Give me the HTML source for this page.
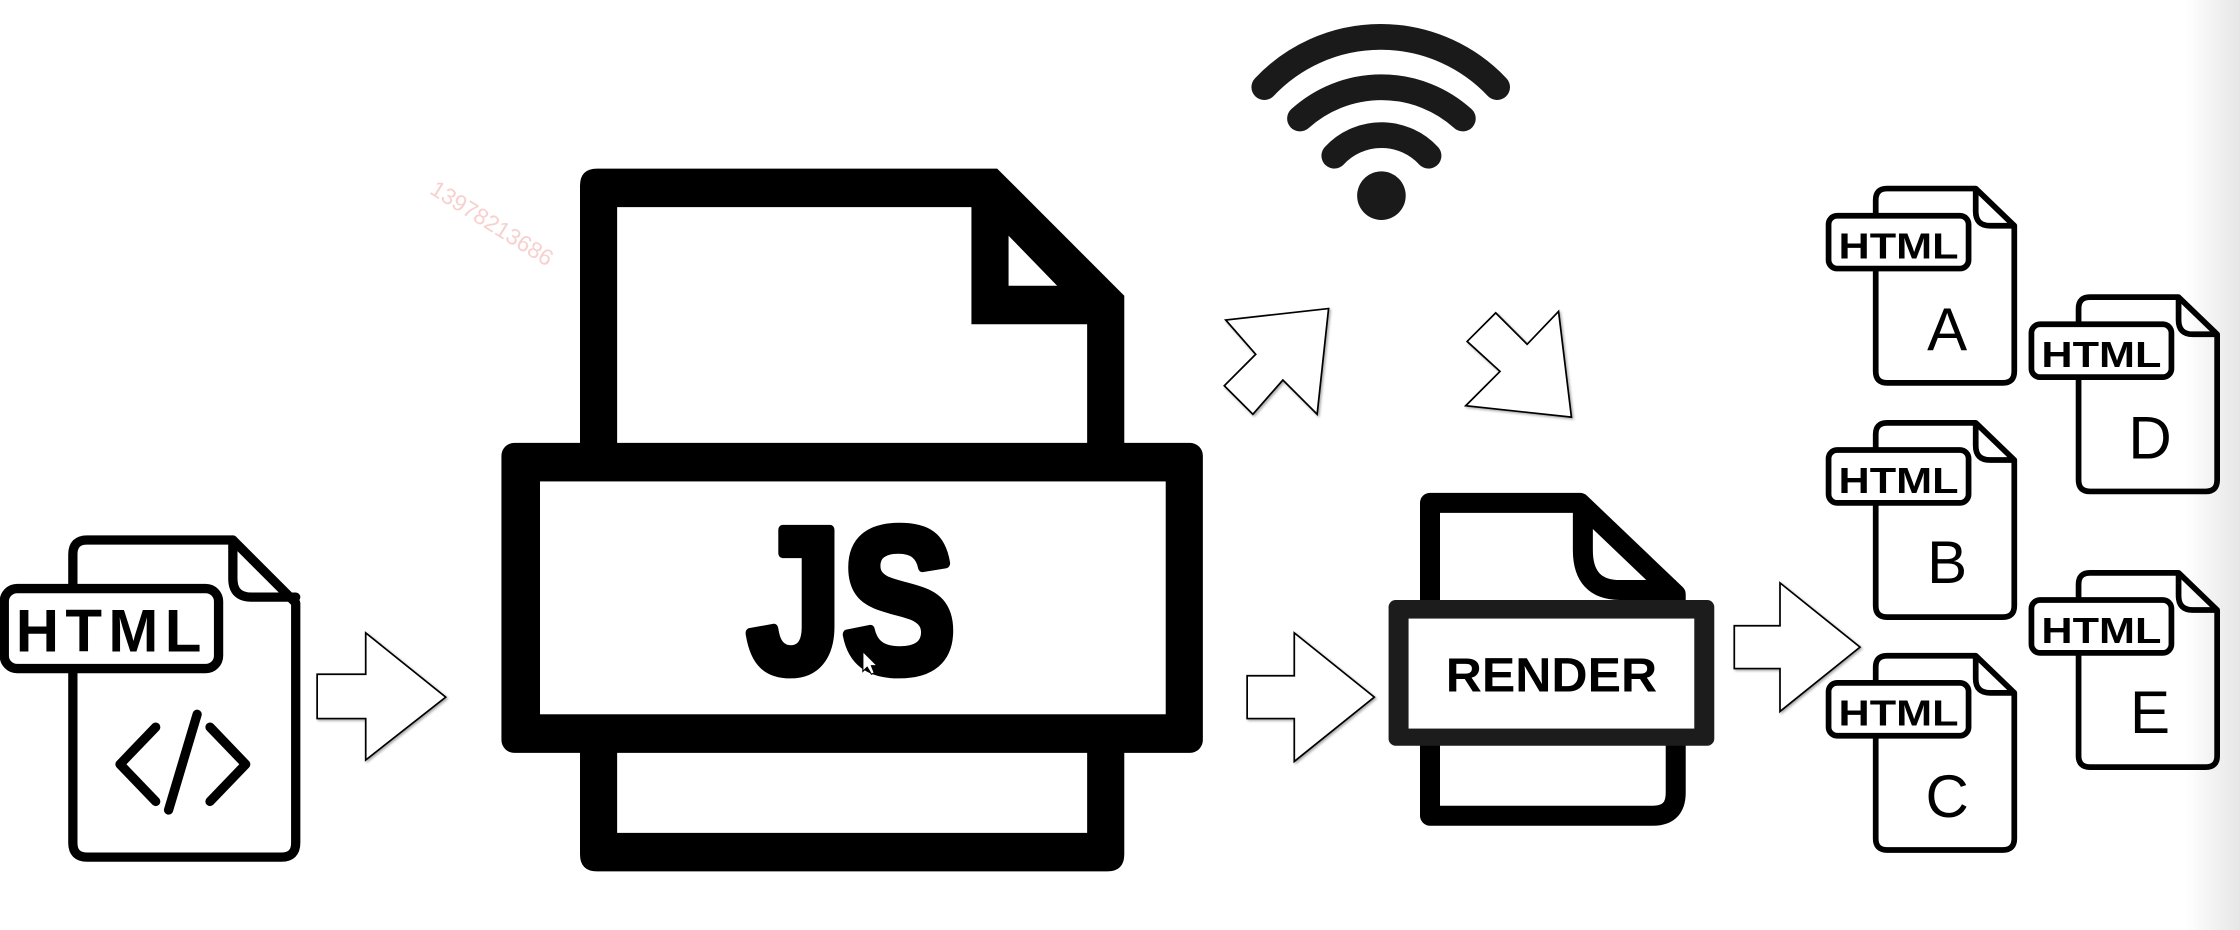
<!DOCTYPE html>
<html><head><meta charset="utf-8"><style>
html,body{margin:0;padding:0;background:#fff;}
svg{display:block;}
text{font-family:"Liberation Sans",sans-serif;}
</style></head><body>
<svg width="2240" height="930" viewBox="0 0 1568 651" xmlns="http://www.w3.org/2000/svg">
<defs>
<linearGradient id="g" x1="0" x2="1" y1="0" y2="0">
<stop offset="0" stop-color="#fff"/><stop offset="1" stop-color="#e6e6e6"/>
</linearGradient>
<filter id="sh" x="-20%" y="-20%" width="140%" height="140%"><feDropShadow dx="1" dy="1" stdDeviation="1" flood-color="#000" flood-opacity="0.35"/></filter>
</defs>
<rect width="1568" height="651" fill="#fff"/>
<rect x="1530" y="0" width="38" height="651" fill="url(#g)"/>

<!-- watermark -->
<text x="300" y="135" font-size="16" fill="#f7d0d0" transform="rotate(32 300 135)">13978213686</text>

<!-- left HTML file -->
<g fill="none" stroke="#000" stroke-width="6.5" stroke-linejoin="round" stroke-linecap="round">
<path d="M51 410 V388 Q51 378 61 378 H163 L207 422 V590 Q207 600 197 600 H61 Q51 600 51 590 V470"/>
<path d="M163 378 V405 Q163 418 176 418 H207"/>
<rect x="3" y="412" width="150" height="56" rx="9"/>
<path d="M109 509 L84 535 L109 561"/>
<path d="M147 509 L172 535 L147 561"/>
<path d="M138 500 L118 567"/>
</g>
<text x="76" y="456" font-size="42" font-weight="bold" text-anchor="middle" textLength="130">HTML</text>

<!-- arrows -->
<g fill="#fff" stroke="#000" stroke-width="1.2" filter="url(#sh)">
<path d="M222 472 H256 V443 L312 488 L256 532 V503 H222 Z"/>
<path d="M873 473 H906 V443 L962 488 L906 533 V503 H873 Z"/>
<path d="M1214 438 H1246 V408 L1302 453 L1246 498 V468 H1214 Z"/>
<path d="M930 216 L922 290 L898 266 L877 290 L857 270 L879 248 L858 224 Z"/>
<path d="M1100 292 L1026 284 L1050 260 L1027 239 L1047 219 L1069 241 L1091 218 Z"/>
</g>

<!-- JS file -->
<path d="M418 118 H698 L787 207 V598 Q787 610 775 610 H418 Q406 610 406 598 V130 Q406 118 418 118 Z" fill="#000"/>
<path d="M432 145 H680 V227 H761 V583 H432 Z" fill="#fff"/>
<path d="M706 165 L740 200 H706 Z" fill="#fff"/>
<rect x="351" y="310" width="491" height="217" rx="9" fill="#000"/>
<rect x="378" y="337" width="438" height="163" fill="#fff"/>
<text x="596" y="470" font-size="144" font-weight="bold" text-anchor="middle" textLength="146" lengthAdjust="spacingAndGlyphs" stroke="#000" stroke-width="7" stroke-linejoin="round">JS</text>
<path d="M604 456 V470 L607 467 L610 472 L612 471 L610 466 L614 466 Z" fill="#fff" stroke="#000" stroke-width="0.8"/>

<!-- wifi -->
<g fill="none" stroke="#1a1a1a" stroke-width="18" stroke-linecap="round">
<path d="M885 61 A112 112 0 0 1 1048 61"/>
<path d="M910 83 A85 85 0 0 1 1024 83"/>
<path d="M934 109 A45 45 0 0 1 1000 109"/>
</g>
<circle cx="967" cy="137" r="17" fill="#1a1a1a"/>

<!-- RENDER file -->
<g fill="none" stroke="#000" stroke-width="14" stroke-linejoin="round">
<path d="M1001 425 V352 H1106 L1173 416 V555 Q1173 571 1157 571 H1001 V515"/>
<path d="M1108 354 V385 Q1108 413 1134 413 H1173"/>
</g>
<rect x="972" y="420" width="228" height="102" rx="5" fill="#1c1c1c"/>
<rect x="986" y="433" width="200" height="77" fill="#fff"/>
<text x="1086" y="484" font-size="34" font-weight="bold" text-anchor="middle" textLength="148" lengthAdjust="spacingAndGlyphs">RENDER</text>

<!-- small files -->
<g fill="none" stroke="#000" stroke-width="4" stroke-linejoin="round">
<g id="fa"><path d="M1313 150 V140 Q1313 132 1321 132 H1383 L1410 158 V260 Q1410 268 1402 268 H1321 Q1313 268 1313 260 V189"/><path d="M1383 132 V148 Q1383 158 1393 158 H1410"/><rect x="1280" y="151" width="98" height="37" rx="6"/></g>
<use href="#fa" transform="translate(0 164)"/>
<use href="#fa" transform="translate(0 327)"/>
<use href="#fa" transform="translate(142 76)"/>
<use href="#fa" transform="translate(142 269)"/>
</g>
<g font-size="25" font-weight="bold" text-anchor="middle">
<text x="1329" y="181" textLength="84" lengthAdjust="spacingAndGlyphs">HTML</text>
<text x="1329" y="345" textLength="84" lengthAdjust="spacingAndGlyphs">HTML</text>
<text x="1329" y="508" textLength="84" lengthAdjust="spacingAndGlyphs">HTML</text>
<text x="1471" y="257" textLength="84" lengthAdjust="spacingAndGlyphs">HTML</text>
<text x="1471" y="450" textLength="84" lengthAdjust="spacingAndGlyphs">HTML</text>
</g>
<g font-size="42" text-anchor="middle">
<text x="1363" y="245">A</text>
<text x="1363" y="408">B</text>
<text x="1363" y="572">C</text>
<text x="1505" y="321">D</text>
<text x="1505" y="513">E</text>
</g>
</svg>
</body></html>
